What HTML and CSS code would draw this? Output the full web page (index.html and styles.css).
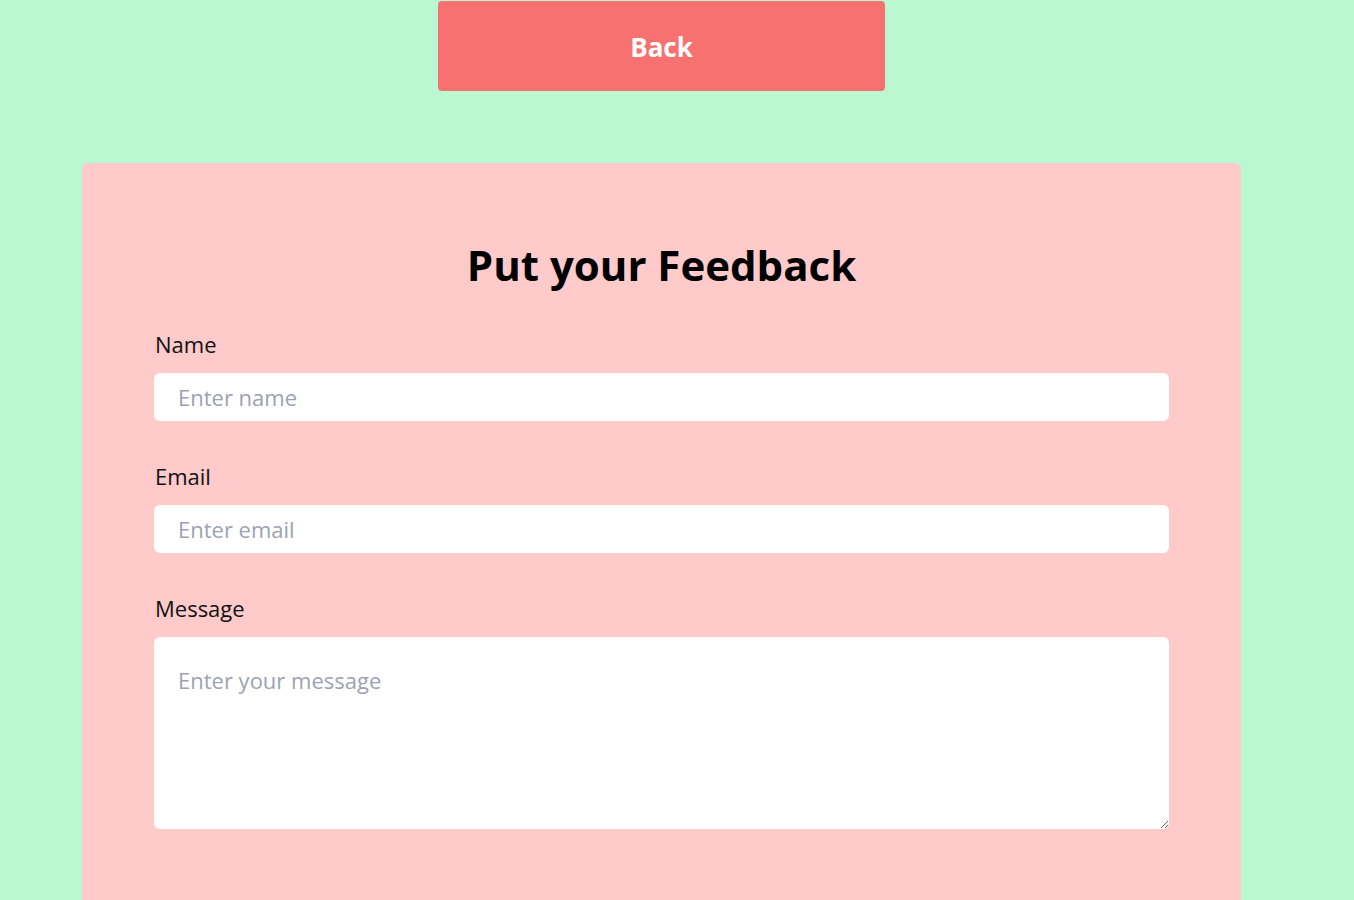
FILE: index.html
```html
<!DOCTYPE html>
<html lang="en">
<head>
<meta charset="utf-8">
<title>Feedback</title>
<link rel="stylesheet" href="styles.css">
</head>
<body>
<div class="page">
  <div class="top">
    <button class="back">Back</button>
  </div>
  <div class="card">
    <h1 class="title">Put your Feedback</h1>
    <form class="form">
      <div class="field">
        <label class="label" for="name">Name</label>
        <input class="input" id="name" type="text" placeholder="Enter name">
      </div>
      <div class="field">
        <label class="label" for="email">Email</label>
        <input class="input" id="email" type="email" placeholder="Enter email">
      </div>
      <div class="field">
        <label class="label" for="msg">Message</label>
        <textarea class="input textarea" id="msg" placeholder="Enter your message"></textarea>
      </div>
    </form>
  </div>
</div>
</body>
</html>
```

FILE: styles.css
```css
html, body {
  margin: 0;
  padding: 0;
  background: #bbf7d0;
  font-family: "Open Sans", "Noto Sans", sans-serif;
}
.page {
  width: 1159px;
  margin-left: 82px;
  padding-top: 1px;
}
.top {
  display: flex;
  justify-content: center;
}
.back {
  width: 447px;
  height: 90px;
  border: none;
  border-radius: 4px;
  background: #f87171;
  color: #fff;
  font-family: inherit;
  font-size: 26px;
  font-weight: 700;
  padding-top: 3px;
  cursor: pointer;
}
.card {
  margin-top: 72px;
  background: #fecaca;
  border-radius: 6px;
  padding: 72px 72px 80px;
  min-height: 700px;
}
.title {
  margin: 0 0 34px;
  text-align: center;
  font-size: 42px;
  line-height: 60px;
  font-weight: 700;
  color: #000;
}
.form {
  display: flex;
  flex-direction: column;
  gap: 40px;
}
.field {
  display: flex;
  flex-direction: column;
  gap: 14px;
}
.label {
  font-size: 22px;
  line-height: 30px;
  color: #111;
  padding-left: 1px;
}
.input {
  box-sizing: border-box;
  width: 1015px;
  height: 48px;
  border: none;
  border-radius: 6px;
  background: #fff;
  padding: 0 24px;
  font-family: inherit;
  font-size: 22px;
  color: #111;
  outline: none;
}
.input::placeholder {
  color: #9ca3af;
}
.textarea {
  height: 192px;
  padding: 28px 24px;
  resize: vertical;
}
```
